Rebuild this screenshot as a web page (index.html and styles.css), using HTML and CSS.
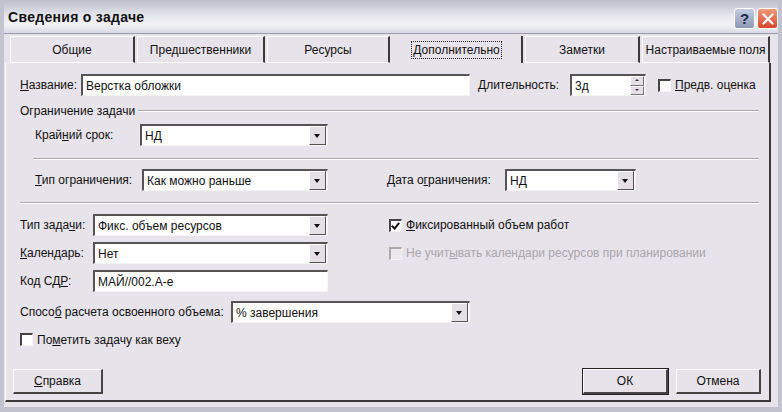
FILE: index.html
```html
<!DOCTYPE html>
<html lang="ru">
<head>
    <meta charset="UTF-8">
    <title>Сведения о задаче</title>
    <link rel="stylesheet" href="styles.css">
</head>
<body>
    <div class="window">
        <div class="titlebar">
            <span class="title">Сведения о задаче</span>
            <div class="title-buttons">
                <span class="tbtn help">?</span>
                <span class="tbtn close">
                    <svg width="12" height="12" viewBox="0 0 12 12"><path d="M1.5 1.5 L10.5 10.5 M10.5 1.5 L1.5 10.5" stroke="#fff" stroke-width="2.2" stroke-linecap="round"/></svg>
                </span>
            </div>
        </div>

        <div class="tabs">
            <div class="tab w1">Общие</div>
            <div class="tab w2">Предшественники</div>
            <div class="tab w3">Ресурсы</div>
            <div class="tab w4 active"><span class="focus">Дополнительно</span></div>
            <div class="tab w5">Заметки</div>
            <div class="tab w6">Настраиваемые поля</div>
        </div>

        <div class="panel">
            <!-- Name / duration -->
            <div class="row r-name">
                <label class="lbl" style="width:61px"><u>Н</u>азвание:</label>
                <div class="field" style="width:389px">Верстка обложки</div>
                <label class="lbl lbl-dur"><u>Д</u>лительность:</label>
                <div class="field spin">
                    <span class="spin-text">3д</span>
                    <span class="spin-btns">
                        <span class="sb"><i class="up"></i></span>
                        <span class="sb"><i class="down"></i></span>
                    </span>
                </div>
                <span class="check est"></span>
                <span class="check-label"><u>П</u>редв. оценка</span>
            </div>

            <!-- Constraint group -->
            <div class="group-title">
                <span>Ограничение задачи</span>
                <span class="line"></span>
            </div>

            <div class="row r-deadline indent">
                <label class="lbl" style="width:105px">Край<u>н</u>ий срок:</label>
                <div class="field combo" style="width:188px"><span class="val">НД</span><span class="arrow"></span></div>
            </div>

            <div class="sep sep-inner"></div>

            <div class="row r-ctype indent">
                <label class="lbl" style="width:107px"><u>Т</u>ип ограничения:</label>
                <div class="field combo" style="width:186px"><span class="val">Как можно раньше</span><span class="arrow"></span></div>
                <label class="lbl lbl-cdate">Дата о<u>г</u>раничения:</label>
                <div class="field combo" style="width:131px"><span class="val">НД</span><span class="arrow"></span></div>
            </div>

            <div class="sep sep-outer"></div>

            <!-- Task type block -->
            <div class="row r-type">
                <label class="lbl" style="width:73px">Тип зада<u>ч</u>и:</label>
                <div class="field combo" style="width:235px"><span class="val">Фикс. объем ресурсов</span><span class="arrow"></span></div>
                <span class="check checked side"></span>
                <span class="check-label"><u>Ф</u>иксированный объем работ</span>
            </div>

            <div class="row r-cal">
                <label class="lbl" style="width:73px"><u>К</u>алендарь:</label>
                <div class="field combo" style="width:235px"><span class="val">Нет</span><span class="arrow"></span></div>
                <span class="check disabled side"></span>
                <span class="check-label muted">Не учит<u>ы</u>вать календари ресурсов при планировании</span>
            </div>

            <div class="row r-wbs">
                <label class="lbl" style="width:73px">Код СД<u>Р</u>:</label>
                <div class="field" style="width:235px">МАЙ//002.А-е</div>
            </div>

            <div class="row r-ev">
                <label class="lbl" style="width:211px">Спосо<u>б</u> расчета освоенного объема:</label>
                <div class="field combo" style="width:239px"><span class="val">% завершения</span><span class="arrow"></span></div>
            </div>

            <div class="row r-mile">
                <span class="check"></span>
                <span class="check-label">По<u>м</u>етить задачу как веху</span>
            </div>

            <div class="buttons">
                <button class="btn btn-help"><u>С</u>правка</button>
                <span class="spacer"></span>
                <button class="btn btn-ok">ОК</button>
                <button class="btn">Отмена</button>
            </div>
        </div>
    </div>
</body>
</html>
```

FILE: styles.css
```css
/* Dialog base */
body {
    margin: 0;
    font-family: "Liberation Sans", Arial, sans-serif;
    font-size: 12px;
    color: #111;
    background: #e7e3ea;
}

.window {
    width: 782px;
    height: 412px;
    background: #e7e3ea;
    box-sizing: border-box;
    border-left: 4px solid #c3c3cf;
    border-right: 4px solid #c3c3cf;
    border-bottom: 5px solid #c3c3cf;
    overflow: hidden;
}

/* Title bar */
.titlebar {
    height: 34px;
    margin: 0 -4px;
    padding: 0 4px 0 8px;
    display: flex;
    align-items: center;
    background: linear-gradient(#bdbdcb 0%, #e4e4ec 45%, #f2f2f6 75%, #d9d9e3 100%);
    border-bottom: 1px solid #9c9cae;
    box-sizing: border-box;
}

.title {
    font-weight: bold;
    font-size: 14px;
    letter-spacing: 0.3px;
    color: #111;
    flex: 1;
}

.title-buttons {
    display: flex;
    gap: 2px;
    margin-top: 4px;
}

.tbtn {
    width: 21px;
    height: 21px;
    border-radius: 3px;
    display: flex;
    align-items: center;
    justify-content: center;
    box-sizing: border-box;
    border: 1px solid #fff;
}

.tbtn.help {
    background: linear-gradient(#c6cde0, #8c97b8);
    color: #1f2a52;
    font-weight: bold;
    font-size: 15px;
}

.tbtn.close {
    background: linear-gradient(#f29a7c, #d8452a);
}

/* Tabs */
.tabs {
    display: flex;
    gap: 2px;
    height: 27px;
    padding-left: 6px;
    margin-top: 2px;
}

.tab {
    box-sizing: border-box;
    height: 27px;
    display: flex;
    align-items: center;
    justify-content: center;
    border-top: 1px solid #fff;
    border-left: 1px solid #fff;
    border-right: 2px solid #3a3a3a;
    border-bottom: 1px solid #fff;
}

.tab.active {
    border: none;
    border-right: 2px solid #3a3a3a;
}

.tab .focus {
    outline: 1px dotted #222;
    padding: 1px 1px;
}

.w1 { width: 125px; }
.w2 { width: 128px; }
.w3 { width: 123px; }
.w4 { width: 131px; }
.w5 { width: 115px; }
.w6 { width: 128px; }

/* Panel */
.panel {
    width: 766px;
    box-sizing: border-box;
    margin-left: 1px;
    padding: 10px 0 7px 14px;
    border-left: 1px solid #fff;
    border-right: 2px solid #3a3a3a;
    border-bottom: 2px solid #3a3a3a;
    height: 339px;
}

.row {
    display: flex;
    align-items: center;
    height: 22px;
}

.lbl {
    white-space: nowrap;
}

.indent { padding-left: 15px; }

.field {
    box-sizing: border-box;
    height: 22px;
    background: #fff;
    border-top: 2px solid #555;
    border-left: 2px solid #555;
    border-right: 1px solid #f4f4f4;
    border-bottom: 1px solid #f4f4f4;
    padding: 0 3px;
    display: flex;
    align-items: center;
    white-space: nowrap;
}

.combo {
    padding-right: 0;
    justify-content: space-between;
}

.arrow {
    width: 15px;
    height: 17px;
    margin-right: 1px;
    background: #e4e0e6;
    border-top: 1px solid #fff;
    border-left: 1px solid #fff;
    border-right: 1px solid #555;
    border-bottom: 1px solid #555;
    position: relative;
}

.arrow::after {
    content: "";
    position: absolute;
    left: 4px;
    top: 7px;
    border-left: 3.5px solid transparent;
    border-right: 3.5px solid transparent;
    border-top: 4px solid #111;
}

.r-name { margin-top: 1px; }

.lbl-dur {
    margin-left: 8px;
    width: 92px;
}

.spin {
    width: 76px;
    padding-right: 0;
    justify-content: space-between;
}

.spin-btns {
    display: flex;
    flex-direction: column;
    height: 19px;
    margin-right: 1px;
}

.sb {
    flex: 1;
    width: 14px;
    background: #e4e0e6;
    border-top: 1px solid #fff;
    border-left: 1px solid #fff;
    border-right: 1px solid #777;
    border-bottom: 1px solid #777;
    box-sizing: border-box;
    position: relative;
}

.sb i {
    position: absolute;
    left: 4px;
    top: 2px;
    border-left: 2px solid transparent;
    border-right: 2px solid transparent;
}

.sb i.up { border-bottom: 2px solid #333; }
.sb i.down { border-top: 2px solid #333; }

/* Checkboxes */
.check {
    width: 13px;
    height: 13px;
    box-sizing: border-box;
    background: #fff;
    border-top: 2px solid #444;
    border-left: 2px solid #444;
    border-right: 1px solid #f4f4f4;
    border-bottom: 1px solid #f4f4f4;
    position: relative;
    flex: none;
}

.check.checked::after {
    content: "";
    position: absolute;
    left: 2px;
    top: 0px;
    width: 3px;
    height: 6px;
    border-right: 2px solid #111;
    border-bottom: 2px solid #111;
    transform: rotate(40deg);
}

.check.disabled {
    background: #ece9ee;
    border-top-color: #aaa;
    border-left-color: #aaa;
}

.check-label {
    margin-left: 4px;
    white-space: nowrap;
}

.check-label.muted { color: #a9a6ad; }

.est { margin-left: 12px; }
.side { margin-left: 61px; }

/* Group title & separators */
.group-title {
    display: flex;
    align-items: center;
    height: 14px;
    margin-top: 8px;
}

.group-title .line,
.sep {
    height: 0;
    border-top: 1px solid #a8a5ad;
    border-bottom: 1px solid #fff;
}

.group-title .line {
    flex: 1;
    margin-left: 3px;
    margin-right: 10px;
}

.r-deadline { margin-top: 6px; }

.sep-inner {
    margin: 12px 10px 0 13px;
}

.r-ctype { margin-top: 9px; }

.lbl-cdate {
    margin-left: 59px;
    width: 118px;
}

.sep-outer {
    margin: 11px 10px 0 0;
}

.r-type { margin-top: 10px; }
.r-cal { margin-top: 6px; }
.r-wbs { margin-top: 6px; }
.r-ev { margin-top: 9px; }
.r-mile { margin-top: 7px; height: 19px; }

/* Buttons */
.buttons {
    display: flex;
    margin-top: 20px;
    margin-left: -7px;
    padding-right: 8px;
}

.spacer { flex: 1; }

.btn {
    font-family: inherit;
    font-size: 12px;
    width: 90px;
    height: 25px;
    background: #e7e3ea;
    color: #111;
    border-top: 1px solid #fff;
    border-left: 1px solid #fff;
    border-right: 2px solid #444;
    border-bottom: 2px solid #444;
    padding: 0;
}

.btn-ok,
.btn-ok + .btn {
    width: 85px;
}

.btn-ok {
    margin-right: 8px;
    outline: 1px solid #222;
}
```
